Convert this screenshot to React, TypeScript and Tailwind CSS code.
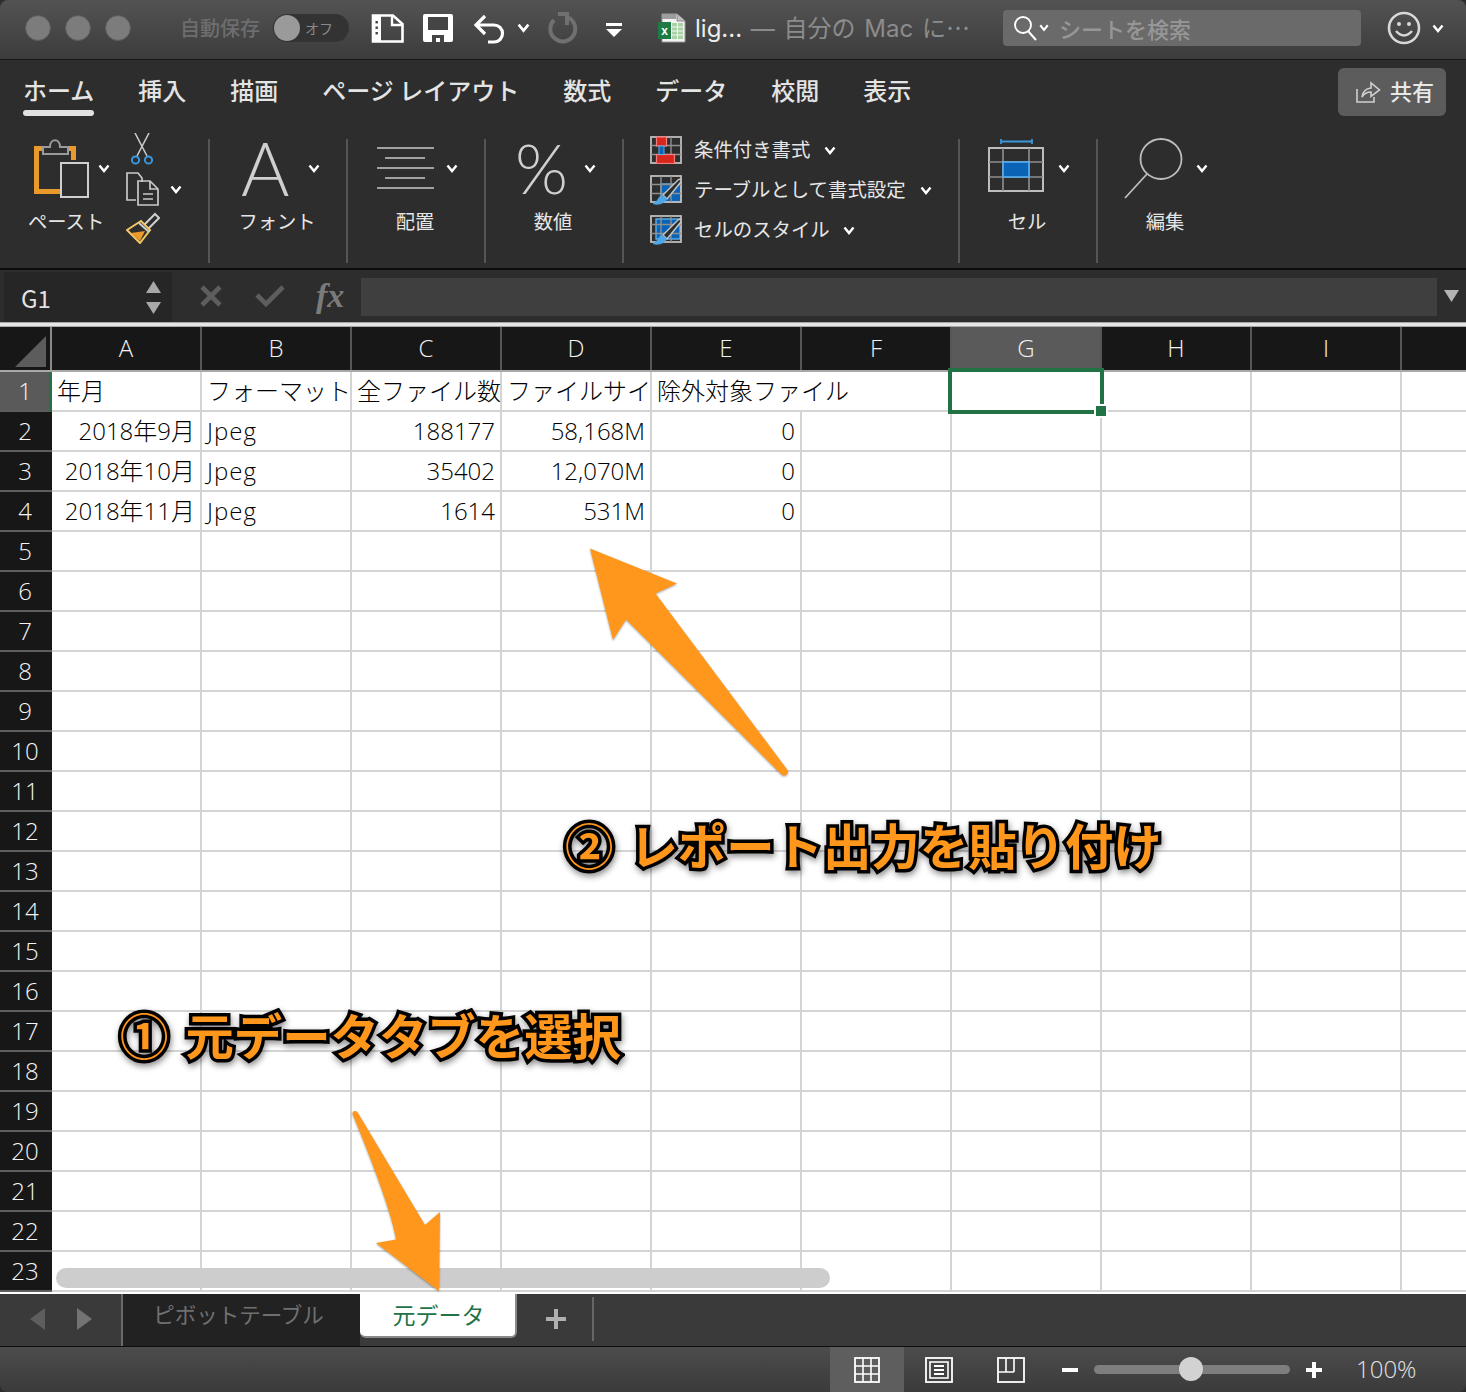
import React from "react";

const Chev = ({ c = "#fff", s = 12 }: { c?: string; s?: number }) => (
  <svg width={s} height={s * 0.75} viewBox="0 0 12 9" className="shrink-0">
    <path d="M1.5 1.5 L6 7 L10.5 1.5" fill="none" stroke={c} strokeWidth="2.4" />
  </svg>
);

const SidebarDoc = () => (
  <svg width="33" height="29" viewBox="0 0 33 29">
    <path d="M2 1.5 H22 L31.5 10 V27.5 H2 Z" fill="none" stroke="#fff" strokeWidth="2.6" />
    <rect x="1" y="1" width="9" height="27" fill="#fff" />
    <path d="M21 1.5 V11 H31" fill="none" stroke="#fff" strokeWidth="2.4" />
    <rect x="4.5" y="7" width="2.4" height="2.4" fill="#444" />
    <rect x="4.5" y="12.5" width="2.4" height="2.4" fill="#444" />
    <rect x="4.5" y="18" width="2.4" height="2.4" fill="#444" />
  </svg>
);

const SaveIcon = () => (
  <svg width="30" height="28" viewBox="0 0 30 28">
    <path d="M2 0 H28 Q30 0 30 2 V26 Q30 28 28 28 H2 Q0 28 0 26 V2 Q0 0 2 0 Z" fill="#fff" />
    <rect x="5" y="3" width="20" height="13" fill="#454545" />
    <path d="M9 28 V21 H21 V28 H17 V24 H13 V28 Z" fill="#454545" />
  </svg>
);

const Undo = () => (
  <svg width="34" height="30" viewBox="0 0 34 30">
    <path d="M12 2 L3 11 L12 20 M3 11 H21 A8.5 8.5 0 0 1 21 28 H15" fill="none" stroke="#fff" strokeWidth="3.2" />
  </svg>
);

const Redo = () => (
  <svg width="32" height="32" viewBox="0 0 32 32">
    <path d="M7 8 A12.5 12.5 0 1 0 21 5.5" fill="none" stroke="#707070" strokeWidth="4" />
    <path d="M20 0 V13 M22 2 H11" fill="none" stroke="#707070" strokeWidth="4" />
  </svg>
);

const QuickDrop = () => (
  <svg width="16" height="14" viewBox="0 0 16 14">
    <rect x="0" y="0" width="16" height="3" fill="#fff" />
    <path d="M0 6 H16 L8 14 Z" fill="#fff" />
  </svg>
);

const ExcelDoc = () => (
  <svg width="28" height="30" viewBox="0 0 28 30">
    <path d="M4 1 H19 L27 8 V29 H4 Z" fill="#f2f2f2" stroke="#9a9a9a" />
    <path d="M19 1 V8 H27" fill="#bdbdbd" stroke="#8a8a8a" />
    <rect x="4" y="1" width="14" height="5" fill="#9d9d9d" />
    <path d="M14 10 H25 V26 H14 Z" fill="#a9d3a5" />
    <path d="M14 14 H25 M14 18 H25 M14 22 H25 M19.5 10 V26" stroke="#f4f4f4" strokeWidth="1" />
    <rect x="0" y="9" width="13" height="17" fill="#1f7a45" />
    <text x="6.5" y="22" fontSize="12" fontWeight="700" fill="#fff" textAnchor="middle" fontFamily="Liberation Sans">x</text>
  </svg>
);

const Smiley = () => (
  <svg width="34" height="34" viewBox="0 0 34 34">
    <circle cx="17" cy="17" r="15" fill="none" stroke="#d8d8d8" strokeWidth="2.6" />
    <circle cx="12" cy="13" r="2" fill="#d8d8d8" />
    <circle cx="22" cy="13" r="2" fill="#d8d8d8" />
    <path d="M9 20 Q17 29 25 20" fill="none" stroke="#d8d8d8" strokeWidth="2.4" />
  </svg>
);

const Share = () => (
  <svg width="26" height="24" viewBox="0 0 26 24">
    <path d="M2 9 V22 H19 V17" fill="none" stroke="#cfcfcf" strokeWidth="1.6" />
    <path d="M7 17 Q8 9 16 8 V3 L24.5 10 L16 16.5 V12 Q10 12 7 17 Z" fill="none" stroke="#cfcfcf" strokeWidth="1.6" />
  </svg>
);

const Paste = () => (
  <svg width="56" height="60" viewBox="0 0 56 60">
    <path d="M1 8 H43 V22 H38 V13 H6 V51 H27 V56 H1 Z" fill="#e99a2b" />
    <path d="M10 16 V9 H17 C17 0 27 0 27 9 H35 V16 Z" fill="#2d2d2d" stroke="#9a9a9a" strokeWidth="2" />
    <rect x="28" y="25" width="27" height="34" fill="#2d2d2d" stroke="#cfcfcf" strokeWidth="2" />
  </svg>
);

const Scissors = () => (
  <svg width="24" height="32" viewBox="0 0 24 32">
    <path d="M5 0 L17 23 M19 0 L7 23" stroke="#c9c9c9" strokeWidth="1.6" fill="none" />
    <circle cx="5.5" cy="27" r="3.6" fill="none" stroke="#3a97dd" strokeWidth="2" />
    <circle cx="18.5" cy="27" r="3.6" fill="none" stroke="#3a97dd" strokeWidth="2" />
  </svg>
);

const CopyIcon = () => (
  <svg width="33" height="34" viewBox="0 0 33 34">
    <path d="M10 28 H1 V1 H12 L16 6 V10" fill="none" stroke="#c9c9c9" strokeWidth="1.7" />
    <path d="M12 9 H24 L32 17 V33 H12 Z" fill="none" stroke="#c9c9c9" strokeWidth="1.7" />
    <path d="M24 9 V17 H32 M17 22 H27 M17 27 H27" fill="none" stroke="#c9c9c9" strokeWidth="1.7" />
  </svg>
);

const Brush = () => (
  <svg width="34" height="32" viewBox="0 0 34 32">
    <path d="M17 14 L29 2 L33 6 L21 18" fill="none" stroke="#cfcfcf" strokeWidth="2" />
    <path d="M1 18 L15 9 L24 18 L14 31 Z" fill="#2d2d2d" stroke="#f3c766" strokeWidth="2" />
    <path d="M5 21 L19 19 L14 29 Z" fill="#e99a2b" />
    <path d="M13 11 L23 20" stroke="#cfcfcf" strokeWidth="2" />
  </svg>
);

const AlignIcon = () => (
  <svg width="58" height="44" viewBox="0 0 58 44">
    <g stroke="#c8c8c8" strokeWidth="1.7">
      <path d="M1 2 H58" />
      <path d="M9 12 H49" />
      <path d="M1 22 H58" />
      <path d="M9 32 H49" />
      <path d="M1 42 H58" />
    </g>
  </svg>
);

const GridBase = ({ children }: { children?: React.ReactNode }) => (
  <>
    {children}
    <rect x="1" y="1" width="30" height="26" fill="none" stroke="#bdbdbd" strokeWidth="1.8" />
    <path d="M11 1 V27 M21 1 V27 M1 9.5 H31 M1 18.5 H31" stroke="#8f8f8f" strokeWidth="1.4" />
  </>
);

const CondIcon = () => (
  <svg width="32" height="28" viewBox="0 0 32 28">
    <GridBase />
    <rect x="6.5" y="1" width="10" height="9" fill="#d9261c" stroke="#f08080" strokeWidth="1.2" />
    <rect x="6.5" y="18.5" width="18" height="9" fill="#d9261c" stroke="#f08080" strokeWidth="1.2" />
    <rect x="9" y="10" width="5" height="8.5" fill="#0a63b5" stroke="#59b0ee" strokeWidth="1" />
  </svg>
);

const BrushOver = () => (
  <>
    <path d="M13 20 L28 5 C31 3 32 5 30 8 L17 24 Z" fill="#2d2d2d" stroke="#c9c9c9" strokeWidth="1.4" />
    <path d="M4 27 C8 27 8 20 13 20 L17 24 C15 28 9 31 3 29 Z" fill="#4ea6e6" />
  </>
);

const TableIcon = () => (
  <svg width="33" height="30" viewBox="0 0 33 30">
    <GridBase>
      <rect x="11" y="9" width="20" height="18" fill="#0a63b5" stroke="#59b0ee" strokeWidth="1.4" />
    </GridBase>
    <BrushOver />
  </svg>
);

const StyleIcon = () => (
  <svg width="33" height="30" viewBox="0 0 33 30">
    <GridBase>
      <rect x="6" y="4" width="24" height="20" fill="#0a63b5" stroke="#59b0ee" strokeWidth="1.4" />
    </GridBase>
    <BrushOver />
  </svg>
);

const CellIcon = () => (
  <svg className="mb-[7px]" width="58" height="54" viewBox="0 0 58 54">
    <path d="M13 1 V6 M13 3.5 H44 M44 1 V6" stroke="#3a97dd" strokeWidth="1.8" fill="none" />
    <rect x="1" y="10" width="54" height="43" fill="none" stroke="#bdbdbd" strokeWidth="2" />
    <path d="M15 10 V53 M41 10 V53 M1 24 H55 M1 39 H55" stroke="#8f8f8f" strokeWidth="1.6" />
    <rect x="15" y="24" width="26" height="15" fill="#0a63b5" stroke="#59b0ee" strokeWidth="1.6" />
  </svg>
);

const Magnifier = () => (
  <svg width="62" height="62" viewBox="0 0 62 62">
    <ellipse cx="37" cy="22" rx="20.5" ry="20" fill="none" stroke="#bdbdbd" strokeWidth="1.8" />
    <path d="M23 37 L1 61" stroke="#bdbdbd" strokeWidth="1.8" />
  </svg>
);

const Nav = ({ d, c }: { d: string; c: string }) => (
  <svg width="16" height="22" viewBox="0 0 16 22">
    <path d={d} fill={c} />
  </svg>
);

const GridView = () => (
  <svg width="26" height="26" viewBox="0 0 26 26">
    <rect x="1" y="1" width="24" height="24" fill="none" stroke="#fff" strokeWidth="1.8" />
    <path d="M9 1 V25 M17 1 V25 M1 9 H25 M1 17 H25" stroke="#fff" strokeWidth="1.6" />
  </svg>
);
const PageView = () => (
  <svg width="28" height="26" viewBox="0 0 28 26">
    <rect x="1" y="1" width="26" height="24" fill="none" stroke="#fff" strokeWidth="1.8" />
    <rect x="5" y="5" width="18" height="16" fill="none" stroke="#fff" strokeWidth="1.6" />
    <path d="M9 9 H19 M9 13 H19 M9 17 H19" stroke="#fff" strokeWidth="1.8" />
  </svg>
);
const BreakView = () => (
  <svg width="28" height="26" viewBox="0 0 28 26">
    <rect x="1" y="1" width="26" height="24" fill="none" stroke="#fff" strokeWidth="1.8" />
    <path d="M9 1 V15 M17 1 V15 M1 15 H17" stroke="#fff" strokeWidth="1.6" fill="none" />
  </svg>
);

const Divider = () => <div className="w-[2px] h-[124px] self-end mb-[5px] bg-[#555555] shrink-0" />;

const Group = ({ icon, label, pl, gap }: { icon: React.ReactNode; label: string; pl: string; gap: string }) => (
  <div className="w-[136px] shrink-0 flex flex-col">
    <div className={`h-[84px] flex items-center ${pl} ${gap}`}>
      {icon}
      <Chev />
    </div>
    <div className="-mt-[3px] h-[28px] pr-[2px] text-center text-[19.3px] leading-[28px] text-[#e6e6e6]">{label}</div>
  </div>
);

const tabs = ["ホーム", "挿入", "描画", "ページ レイアウト", "数式", "データ", "校閲", "表示"];
const cols = ["A", "B", "C", "D", "E", "F", "G", "H", "I"];

type Cell = { t?: string; r?: boolean };
const data: Record<number, Cell[]> = {
  1: [{ t: "年月" }, { t: "フォーマット" }, { t: "全ファイル数" }, { t: "ファイルサイ" }, { t: "除外対象ファイル" }],
  2: [{ t: "2018年9月", r: true }, { t: "Jpeg" }, { t: "188177", r: true }, { t: "58,168M", r: true }, { t: "0", r: true }],
  3: [{ t: "2018年10月", r: true }, { t: "Jpeg" }, { t: "35402", r: true }, { t: "12,070M", r: true }, { t: "0", r: true }],
  4: [{ t: "2018年11月", r: true }, { t: "Jpeg" }, { t: "1614", r: true }, { t: "531M", r: true }, { t: "0", r: true }],
};
const rows = Array.from({ length: 23 }, (_, i) => i + 1);

export default function App() {
  return (
    <div className="relative w-[1466px] h-[1392px] overflow-hidden bg-[#2d2d2d] [font-family:'Noto_Sans_CJK_JP','Noto_Sans',sans-serif]">
      {/* Title bar */}
      <div className="h-[59px] flex items-center pb-[3px] bg-gradient-to-b from-[#535353] to-[#3c3c3c] rounded-t-lg">
        <div className="flex ml-[25px] gap-[14px]">
          <div className="w-[26px] h-[26px] rounded-full bg-[#7c7c7c] border border-[#5a5a5a]" />
          <div className="w-[26px] h-[26px] rounded-full bg-[#7c7c7c] border border-[#5a5a5a]" />
          <div className="w-[26px] h-[26px] rounded-full bg-[#7c7c7c] border border-[#5a5a5a]" />
        </div>
        <span className="ml-[49px] text-[20px] text-[#6e6e6e] font-medium w-[79px] whitespace-nowrap">自動保存</span>
        <div className="ml-[14px] w-[76px] h-[28px] rounded-full bg-[#333333] flex items-center pl-[1px]">
          <div className="w-[26px] h-[26px] rounded-full bg-[#9a9a9a]" />
          <span className="ml-[5px] text-[14px] text-[#8a8a8a]">オフ</span>
        </div>
        <div className="ml-[22px]"><SidebarDoc /></div>
        <div className="ml-[19px]"><SaveIcon /></div>
        <div className="ml-[20px] mt-[1px]"><Undo /></div>
        <div className="ml-[10px] mr-[17px]"><Chev s={13} /></div>
        <Redo />
        <div className="ml-[27px] mt-[3px]"><QuickDrop /></div>
        <div className="ml-[36px]"><ExcelDoc /></div>
        <div className="ml-[9px] w-[300px] text-[24px] whitespace-nowrap text-[#ececec] [word-spacing:2px] [font-family:Inter,'Noto_Sans_CJK_JP',sans-serif]">
          lig...<span className="text-[#8c8c8c]"> — 自分の Mac に<span className="[font-family:'Noto_Sans_CJK_JP',sans-serif]">…</span></span>
        </div>
        <div className="ml-[8px] w-[358px] h-[36px] rounded bg-[#6a6a6a] flex items-center pl-[10px]">
          <svg width="24" height="26" viewBox="0 0 24 26">
            <circle cx="10" cy="10" r="8" fill="none" stroke="#fff" strokeWidth="1.9" />
            <path d="M15 16 L23 25" stroke="#fff" strokeWidth="2" />
          </svg>
          <div className="ml-[2px]"><Chev s={10} /></div>
          <span className="ml-[10px] text-[22px] text-[#979797] font-medium">シートを検索</span>
        </div>
        <div className="ml-[26px]"><Smiley /></div>
        <div className="ml-[11px]"><Chev /></div>
      </div>
      <div className="h-[1px] bg-[#161616]" />

      {/* Ribbon tabs */}
      <div className="h-[66px] flex bg-[#2d2d2d]">
        <div className="flex pl-[23px] gap-[44px] pt-[13px]">
          {tabs.map((t, i) => (
            <div key={t} className="relative text-[24px] leading-[34px] font-medium text-[#e4e4e4] whitespace-nowrap h-[42px]">
              {t}
              {i === 0 && <div className="absolute left-0 top-[37px] w-[71px] h-[6px] rounded-full bg-[#e2e2e2]" />}
            </div>
          ))}
        </div>
        <div className="ml-auto mr-[20px] mt-[8px] w-[108px] h-[48px] rounded-md bg-[#5c5c5c] flex items-center pl-[17px] gap-[9px]">
          <Share />
          <span className="text-[22px] font-medium text-[#e8e8e8] pb-[3px]">共有</span>
        </div>
      </div>

      {/* Ribbon body */}
      <div className="h-[142px] flex bg-[#2d2d2d]">
        <div className="w-[208px] shrink-0 flex">
          <div className="w-[126px] shrink-0 flex flex-col">
            <div className="h-[84px] flex items-center pl-[33px] gap-[9px]">
              <Paste />
              <Chev />
            </div>
            <div className="-mt-[3px] pl-[28px] h-[28px] text-[19.3px] leading-[28px] text-[#e6e6e6] whitespace-nowrap">ペースト</div>
          </div>
          <div className="flex flex-col pt-[7px]">
            <div className="ml-[4px]"><Scissors /></div>
            <div className="mt-[7px] flex items-center gap-[11px]">
              <CopyIcon />
              <Chev />
            </div>
            <div className="mt-[6px]"><Brush /></div>
          </div>
        </div>
        <Divider />
        <Group icon={<span className="block w-[47px] h-[56px] text-[74px] leading-[56px] font-light text-[#cfcfcf] [font-family:Lato,sans-serif]">A</span>} label="フォント" pl="pl-[31px]" gap="gap-[20px]" />
        <Divider />
        <Group icon={<AlignIcon />} label="配置" pl="pl-[28px]" gap="gap-[12px]" />
        <Divider />
        <Group icon={<span className="block h-[56px] text-[68px] leading-[56px] font-light text-[#cfcfcf] [font-family:Lato,sans-serif]">%</span>} label="数値" pl="pl-[29px]" gap="gap-[16px]" />
        <Divider />
        <div className="w-[334px] shrink-0 flex flex-col pl-[26px] pt-[9px] text-[19.4px] text-[#e6e6e6]">
          <div className="h-[30px] flex items-center">
            <CondIcon />
            <span className="ml-[12px] pb-[2px] whitespace-nowrap">条件付き書式</span>
            <div className="ml-[14px]"><Chev /></div>
          </div>
          <div className="mt-[10px] h-[30px] flex items-center">
            <TableIcon />
            <span className="ml-[11px] pb-[2px] whitespace-nowrap">テーブルとして書式設定</span>
            <div className="ml-[14px]"><Chev /></div>
          </div>
          <div className="mt-[10px] h-[30px] flex items-center">
            <StyleIcon />
            <span className="ml-[11px] pb-[2px] whitespace-nowrap">セルのスタイル</span>
            <div className="ml-[13px]"><Chev /></div>
          </div>
        </div>
        <Divider />
        <Group icon={<CellIcon />} label="セル" pl="pl-[28px]" gap="gap-[12px]" />
        <Divider />
        <Group icon={<Magnifier />} label="編集" pl="pl-[26px]" gap="gap-[10px]" />
      </div>
      <div className="h-[2px] bg-[#0c0c0c]" />

      {/* Formula bar */}
      <div className="h-[52px] flex bg-[#2d2d2d]">
        <div className="ml-[4px] w-[168px] h-[50px] mt-[2px] bg-[#262626] flex items-center pl-[17px] pr-[11px] justify-between">
          <span className="text-[24px] text-[#e2e2e2] mt-[1px]">G1</span>
          <div className="flex flex-col gap-[9px]">
            <svg width="15" height="12" viewBox="0 0 15 12"><path d="M7.5 0 L15 12 H0 Z" fill="#a8a8a8" /></svg>
            <svg width="15" height="12" viewBox="0 0 15 12"><path d="M7.5 12 L15 0 H0 Z" fill="#a8a8a8" /></svg>
          </div>
        </div>
        <div className="flex items-center h-[52px]">
          <svg className="ml-[28px]" width="22" height="22" viewBox="0 0 22 22">
            <path d="M2 2 L20 20 M20 2 L2 20" stroke="#5d5d5d" strokeWidth="4.6" />
          </svg>
          <svg className="ml-[33px]" width="30" height="22" viewBox="0 0 30 22">
            <path d="M2 10 L11 19 L28 2" fill="none" stroke="#5d5d5d" strokeWidth="4.6" />
          </svg>
          <span className="ml-[31px] w-[30px] text-[34px] leading-[40px] italic font-bold text-[#7b7b7b] [font-family:'Liberation_Serif',serif]">fx</span>
        </div>
        <div className="ml-[15px] mt-[8px] w-[1076px] h-[38px] bg-[#3f3f3f]" />
        <svg className="ml-[7px] mt-[20px]" width="15" height="12" viewBox="0 0 15 12"><path d="M7.5 12 L15 0 H0 Z" fill="#b4b4b4" /></svg>
      </div>
      <div className="h-[5px] bg-[#e6e6e6] border-t border-b border-[#a8a8a8]" />

      {/* Sheet */}
      <div className="bg-white h-[967px] [font-family:'Open_Sans','Noto_Sans_CJK_JP',sans-serif]">
        <div className="flex h-[45px] bg-[#171717] border-b-2 border-[#a9a9a9]">
          <div className="w-[52px] shrink-0 border-r-2 border-[#8a8a8a] flex items-end">
            <svg width="50" height="43" viewBox="0 0 50 43"><path d="M15 40 L46 9 V40 Z" fill="#5c5c5c" /></svg>
          </div>
          {cols.map((c) => (
            <div
              key={c}
              className={`w-[150px] shrink-0 border-r-2 border-[#565656] text-center text-[24px] leading-[41px] font-light text-[#f2f2f2] ${c === "G" ? "bg-[#5a5a5a]" : ""}`}
            >
              {c}
            </div>
          ))}
        </div>
        {rows.map((r) => (
          <div key={r} className="flex h-[40px]">
            <div className={`relative w-[52px] shrink-0 text-center text-[24px] leading-[38px] font-light text-[#f4f4f4] pr-[2px] border-b-2 border-[#5e5e5e] ${r === 1 ? "bg-[#5a5a5a]" : "bg-[#171717]"}`}>
              {r}
              {r === 1 && <div className="absolute right-0 top-0 bottom-[-2px] w-[3px] bg-[#217346]" />}
            </div>
            {cols.map((c, i) => {
              const cell = data[r]?.[i];
              const noRight = r === 1 && c === "E";
              return (
                <div
                  key={c}
                  className={`relative w-[150px] shrink-0 border-b-2 border-[#d4d4d4] px-[5px] text-[24px] leading-[38px] font-light text-black whitespace-nowrap ${noRight ? "" : "border-r-2"} ${cell?.r ? "text-right" : "text-left"} ${cell?.t === "Jpeg" ? "tracking-[1px]" : ""}`}
                >
                  {cell?.t}
                  {r === 1 && c === "G" && (
                    <>
                      <div className="absolute z-10 -left-[4px] -top-[4px] w-[156px] h-[46px] border-[4px] border-[#217346]" />
                      <div className="absolute z-10 left-[142px] top-[32px] w-[14px] h-[14px] bg-[#217346] border-2 border-white" />
                    </>
                  )}
                </div>
              );
            })}
            <div className="flex-1 border-b-2 border-[#d4d4d4]" />
          </div>
        ))}
      </div>

      {/* Sheet tabs */}
      <div className="h-[52px] flex bg-[#3a3a3a]">
        <div className="w-[121px] flex items-center pl-[30px] gap-[30px] pb-[2px] shrink-0">
          <Nav d="M0 11 L15 0 V22 Z" c="#5e5e5e" />
          <Nav d="M16 11 L1 0 V22 Z" c="#737373" />
        </div>
        <div className="w-[239px] shrink-0 bg-[#222222] border-l-2 border-[#6a6a6a] pr-[6px] text-center text-[21.5px] leading-[40px] text-[#707070]">ピボットテーブル</div>
        <div className="w-[157px] h-[44px] shrink-0 bg-white rounded-b-md border-b-2 border-r-2 border-[#8a8a8a] pl-[2px] text-center text-[23px] leading-[40px] text-[#217346]">元データ</div>
        <div className="w-[77px] h-[44px] flex items-center justify-center border-r-2 border-[#666666] shrink-0 mt-[3px] pl-[3px]">
          <svg width="20" height="20" viewBox="0 0 20 20"><path d="M10 0 V20 M0 10 H20" stroke="#b0b0b0" strokeWidth="4" /></svg>
        </div>
      </div>
      <div className="h-[1px] bg-[#0e0e0e]" />

      {/* Status bar */}
      <div className="h-[45px] flex items-center bg-gradient-to-b from-[#4c4c4c] to-[#3b3b3b] rounded-b-lg">
        <div className="ml-[830px] w-[74px] h-[45px] bg-[#5e5e5e] flex items-center justify-center shrink-0"><GridView /></div>
        <div className="ml-[21px]"><PageView /></div>
        <div className="ml-[44px]"><BreakView /></div>
        <div className="ml-[37px] w-[16px] h-[4px] bg-white" />
        <div className="relative ml-[16px] w-[196px] h-[9px] rounded-full bg-[#7e7e7e]">
          <div className="absolute left-[85px] -top-[8px] w-[24px] h-[24px] rounded-full bg-[#d2d2d2]" />
        </div>
        <svg className="ml-[16px]" width="16" height="16" viewBox="0 0 16 16"><path d="M8 0 V16 M0 8 H16" stroke="#fff" strokeWidth="4" /></svg>
        <span className="ml-[34px] pb-[2px] text-[24px] font-light text-[#e2e2e2] [font-family:'Open_Sans',sans-serif]">100%</span>
      </div>

      {/* Overlays */}
      <div className="absolute left-[56px] top-[1268px] w-[774px] h-[20px] rounded-full bg-[#cdcdcd]" />
      <svg className="absolute left-0 top-0 pointer-events-none" width="1466" height="1392" viewBox="0 0 1466 1392">
        <g fill="#ff971c" style={{ filter: "drop-shadow(0.5px 1px 1px rgba(0,0,0,0.35))" }}>
          <path d="M590 548.5 L677 583.5 L655.5 593.5 L787.5 770 Q789 773 786 775 Q783.5 776.5 781 774 L626 619.5 L613 640 Z" />
          <path d="M352.5 1114 Q352 1111 355 1111 Q357 1111 358 1113 L425 1225 L440 1212 L439 1291 L376 1243 L396 1239.5 Q390 1205 352.5 1114 Z" />
        </g>
      </svg>
      <div className="absolute left-[565px] top-[809px] text-[48.4px] leading-[70px] font-bold whitespace-nowrap text-[#ff971c] [-webkit-text-stroke:7px_#000] [paint-order:stroke_fill] drop-shadow-[1px_3px_3px_rgba(0,0,0,0.45)]">
        <span className="mr-[5px]">② </span>レポート出力を貼り付け
      </div>
      <div className="absolute left-[120px] top-[999px] text-[48.4px] leading-[70px] font-bold whitespace-nowrap text-[#ff971c] [-webkit-text-stroke:7px_#000] [paint-order:stroke_fill] drop-shadow-[1px_3px_3px_rgba(0,0,0,0.45)]">
        <span className="mr-[6px]">① </span>元データタブを選択
      </div>
    </div>
  );
}
